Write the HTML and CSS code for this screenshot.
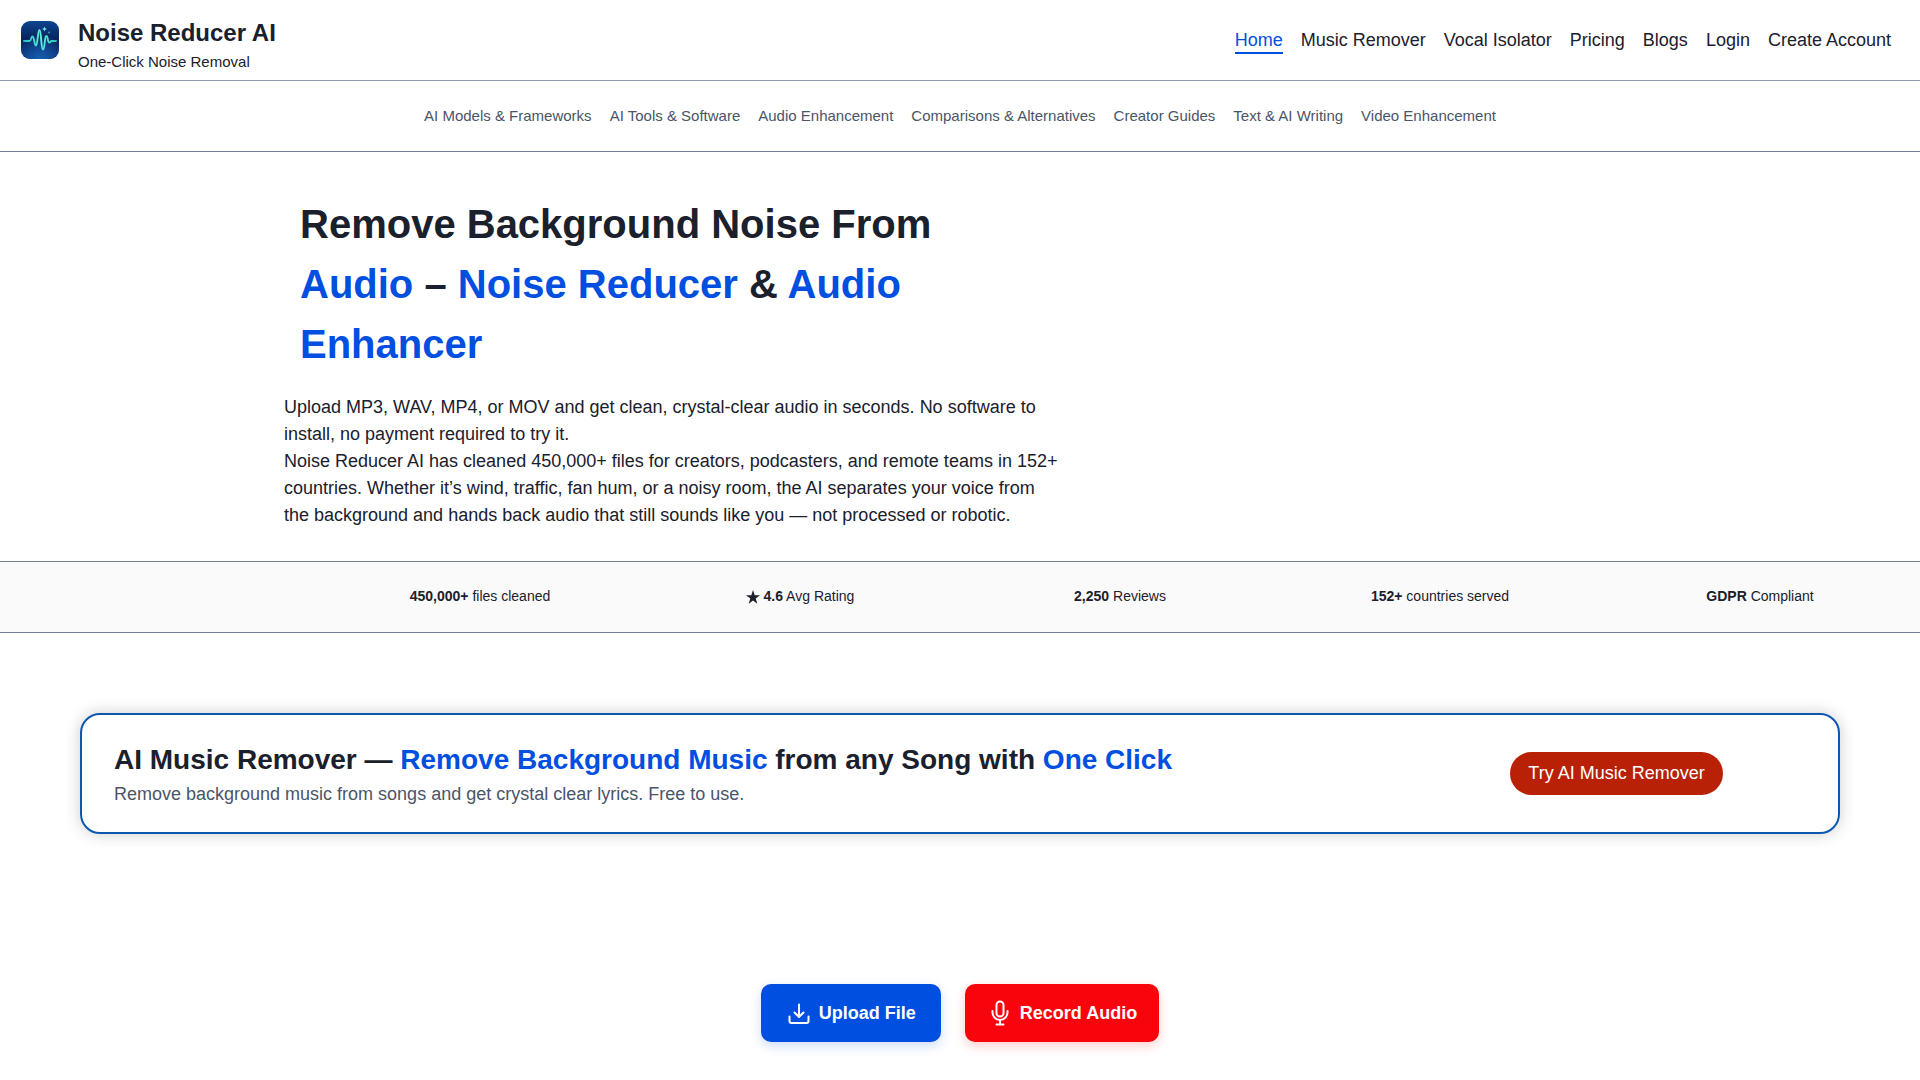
FILE: index.html
```html
<!DOCTYPE html>
<html lang="en">
<head>
<meta charset="utf-8">
<meta name="viewport" content="width=device-width, initial-scale=1">
<title>Noise Reducer AI</title>
<link rel="stylesheet" href="styles.css">
</head>
<body>
<header class="header">
  <a class="brand" href="#">
    <svg class="brand-logo" viewBox="0 0 38 38" aria-hidden="true">
      <defs>
        <radialGradient id="glow" cx="50%" cy="105%" r="70%">
          <stop offset="0" stop-color="#1763b8"/>
          <stop offset="1" stop-color="#1763b8" stop-opacity="0"/>
        </radialGradient>
        <linearGradient id="sky" x1="0" y1="0" x2="0" y2="1">
          <stop offset="0" stop-color="#0b4590"/>
          <stop offset=".45" stop-color="#0a2560"/>
          <stop offset="1" stop-color="#0a2d70"/>
        </linearGradient>
        <linearGradient id="wave" x1="0" y1="0" x2="1" y2="0">
          <stop offset="0" stop-color="#22bfc4"/>
          <stop offset=".55" stop-color="#5df2dc"/>
          <stop offset="1" stop-color="#22c6b8"/>
        </linearGradient>
      </defs>
      <rect width="38" height="38" rx="9" fill="url(#sky)"/>
      <rect width="38" height="38" rx="9" fill="url(#glow)"/>
      <path d="M3 20H8.500C10.500 20 9.800 15.500 11.500 15.500S13.300 24.500 15 24.500S16.700 9 18.500 9S20 28.500 22 28.500S23.500 15 25.300 15S26.500 21.500 28.300 21.500S29 20 31 20H35" fill="none" stroke="url(#wave)" stroke-width="1.900" stroke-linecap="round" stroke-linejoin="round"/>
      <path d="M23.500 5.500L24.200 7.300L26 8L24.200 8.700L23.500 10.500L22.800 8.700L21 8L22.800 7.300Z" fill="#7fe9f0"/>
      <circle cx="28" cy="11.500" r=".9" fill="#35a6c4"/>
    </svg>
    <span class="brand-text">
      <span class="brand-name">Noise Reducer AI</span>
      <span class="brand-tagline">One-Click Noise Removal</span>
    </span>
  </a>
  <nav class="main-nav" aria-label="Main">
    <a class="active" href="#">Home</a>
    <a href="#">Music Remover</a>
    <a href="#">Vocal Isolator</a>
    <a href="#">Pricing</a>
    <a href="#">Blogs</a>
    <a href="#">Login</a>
    <a href="#">Create Account</a>
  </nav>
</header>
<nav class="topics" aria-label="Topics">
  <a href="#">AI Models &amp; Frameworks</a>
  <a href="#">AI Tools &amp; Software</a>
  <a href="#">Audio Enhancement</a>
  <a href="#">Comparisons &amp; Alternatives</a>
  <a href="#">Creator Guides</a>
  <a href="#">Text &amp; AI Writing</a>
  <a href="#">Video Enhancement</a>
</nav>
<main>
  <section class="hero">
    <div class="hero-copy">
      <h1>Remove Background Noise From <em>Audio</em> – <em>Noise Reducer</em> &amp; <em>Audio Enhancer</em></h1>
      <p>Upload MP3, WAV, MP4, or MOV and get clean, crystal-clear audio in seconds. No software to install, no payment required to try it.</p>
      <p>Noise Reducer AI has cleaned 450,000+ files for creators, podcasters, and remote teams in 152+ countries. Whether it’s wind, traffic, fan hum, or a noisy room, the AI separates your voice from the background and hands back audio that still sounds like you — not processed or robotic.</p>
    </div>
  </section>
  <ul class="stats">
    <li><strong>450,000+</strong> files cleaned</li>
    <li><svg class="star" viewBox="0 0 14 14" aria-hidden="true"><path d="M7 0L8.700 5.200H14L9.700 8.400L11.300 13.700L7 10.500L2.700 13.700L4.300 8.400L0 5.200H5.300Z" fill="currentColor"/></svg> <strong>4.6</strong> Avg Rating</li>
    <li><strong>2,250</strong> Reviews</li>
    <li><strong>152+</strong> countries served</li>
    <li><strong>GDPR</strong> Compliant</li>
  </ul>
  <section class="promo">
    <div>
      <h2>AI Music Remover — <em>Remove Background Music</em> from any Song with <em>One Click</em></h2>
      <p>Remove background music from songs and get crystal clear lyrics. Free to use.</p>
    </div>
    <a class="promo-link" href="#">Try AI Music Remover</a>
  </section>
  <div class="actions">
    <button class="action upload" type="button">
      <svg class="icon" viewBox="0 0 24 24" aria-hidden="true"><path d="M12 3.500V15.500M7.500 11.500L12 16L16.500 11.500M2.500 15.500V20A2 2 0 0 0 4.500 22H19.500A2 2 0 0 0 21.500 20V15.500"/></svg>
      Upload File
    </button>
    <button class="action record" type="button">
      <svg class="icon" viewBox="0 0 24 24" aria-hidden="true"><rect x="8.500" y="0.500" width="7" height="15" rx="3.500"/><path d="M4.500 10V11.500A7.500 7.500 0 0 0 19.500 11.500V10M12 19V23.500M8.500 23.500H15.500"/></svg>
      Record Audio
    </button>
  </div>
</main>
</body>
</html>
```
FILE: styles.css
```css
* {
  box-sizing: border-box;
}

body {
  margin: 0;
  background: #fff;
  color: #1a202c;
  font-family: "Liberation Sans", Arial, sans-serif;
  font-size: 18px;
  line-height: 27px;
}

h1, h2, p, ul {
  margin: 0;
  padding: 0;
}

a {
  color: inherit;
  text-decoration: none;
}

em {
  color: #004fe0;
  font-style: normal;
}

.header {
  display: flex;
  justify-content: space-between;
  align-items: flex-start;
  padding: 21px 29px 6px 21px;
  border-bottom: 1px solid #8f99ab;
}

.brand {
  display: flex;
  gap: 19px;
}

.brand-logo {
  width: 38px;
  height: 38px;
}

.brand-text {
  display: flex;
  flex-direction: column;
  gap: 5px;
}

.brand-name {
  font-size: 24px;
  font-weight: 700;
  line-height: 24px;
}

.brand-tagline {
  font-size: 15px;
  line-height: 24px;
}

.main-nav {
  display: flex;
  flex-wrap: wrap;
  gap: 18px;
  padding-top: 8px;
}

.main-nav a {
  border-bottom: 2px solid transparent;
  line-height: 23px;
}

.main-nav .active {
  color: #004fe0;
  border-color: #004fe0;
}

.topics {
  display: flex;
  flex-wrap: wrap;
  justify-content: center;
  gap: 18px;
  padding: 23px 16px 24px;
  border-bottom: 1px solid #718096;
  color: #4a5568;
  font-size: 15px;
  line-height: 23px;
}

.hero {
  padding: 42px 284px 32px;
}

.hero-copy {
  max-width: 780px;
}

h1 {
  padding: 0 16px;
  margin-bottom: 20px;
  font-size: 40px;
  line-height: 60px;
}

.stats {
  display: grid;
  grid-template-columns: repeat(6, 1fr);
  padding: 23px 0 25px;
  border: solid #718096;
  border-width: 1px 0;
  background: #fafafa;
  font-size: 14px;
  line-height: 22px;
  list-style: none;
  text-align: center;
}

.stats li:first-child {
  grid-column-start: 2;
}

.star {
  width: 14px;
  height: 14px;
  vertical-align: -3px;
}

.promo {
  display: grid;
  grid-template-columns: 3fr 1fr;
  column-gap: 176px;
  align-items: center;
  margin: 80px 80px 150px;
  padding: 24px 32px;
  border: 2px solid #0d57b0;
  border-radius: 20px;
  box-shadow: 0 0 16px rgba(0, 0, 0, 0.2);
}

h2 {
  font-size: 28px;
  line-height: 42px;
}

.promo p {
  color: #4a5568;
}

.promo-link {
  justify-self: center;
  padding: 8px 18px;
  border-radius: 22px;
  background: #b82105;
  color: #fff;
}

.actions {
  display: flex;
  flex-wrap: wrap;
  justify-content: center;
  gap: 24px;
  padding-bottom: 38px;
}

.action {
  display: flex;
  align-items: center;
  gap: 8px;
  height: 58px;
  border: 0;
  border-radius: 10px;
  color: #fff;
  font: inherit;
  font-weight: 700;
}

.upload {
  padding: 0 25px 0 26px;
  background: #004fe0;
  box-shadow: 0 4px 12px rgba(0, 79, 224, 0.2);
}

.record {
  padding: 0 22px 0 23px;
  background: #f8040c;
  box-shadow: 0 4px 12px rgba(248, 4, 12, 0.2);
}

.icon {
  width: 24px;
  height: 24px;
  overflow: visible;
  fill: none;
  stroke: currentColor;
  stroke-width: 2;
  stroke-linecap: round;
  stroke-linejoin: round;
}
```
